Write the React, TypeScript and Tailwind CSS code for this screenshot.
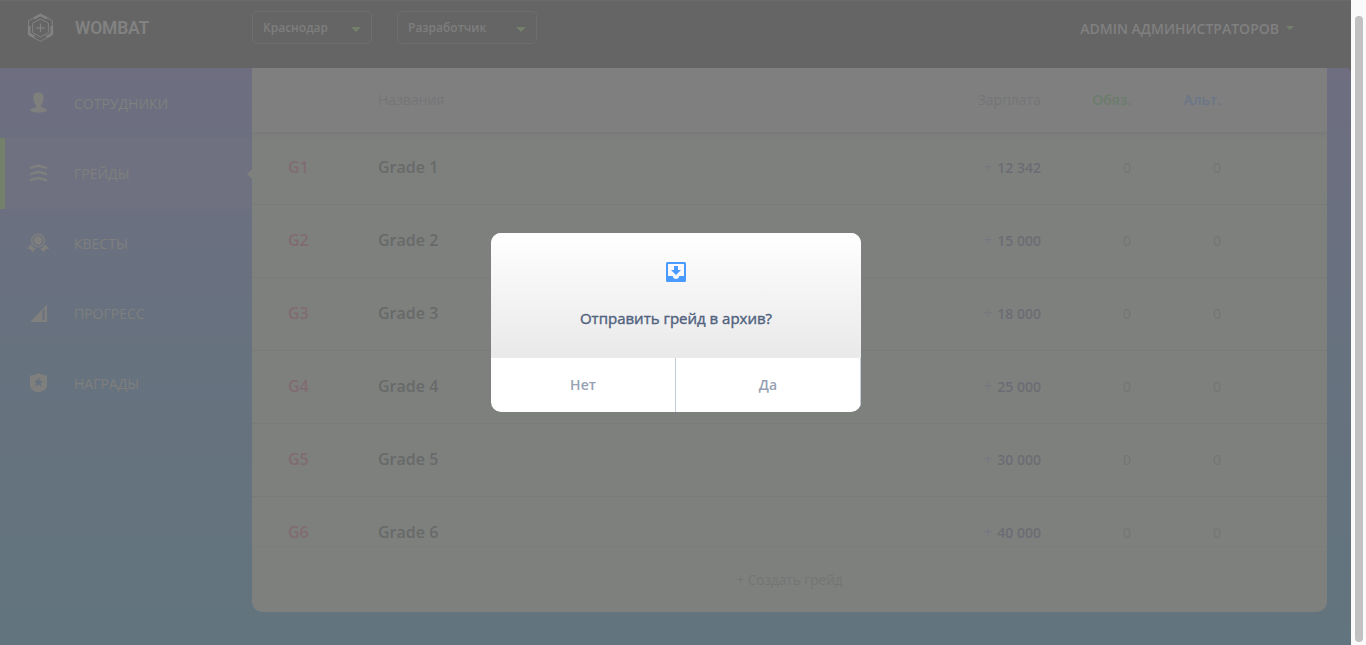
import React from "react";

function UserIcon() {
  return (
    <svg width="18" height="21" viewBox="0 0 18 21" fill="currentColor">
      <path d="M9.500.5c3.600 0 5.200 1.900 5.200 5.200 0 3.400-1.300 6.300-2.900 7.500v1.600c1.200 1 5.500 1.400 6.200 4-2 1.300-4.900 1.900-8.500 1.900s-6.500-.6-8.500-1.900c.7-2.600 5-3 6.200-4v-1.600C5.600 12 4.300 9.100 4.300 5.700 4.300 2.400 5.900.5 9.500.5Z" />
    </svg>
  );
}

function GradesIcon() {
  return (
    <svg width="18" height="18" viewBox="0 0 18 18" fill="currentColor">
      <path d="M1 2.700 9.500.3 18 2.700v2.600L9.500 2.900 1 5.300ZM1 8.900l8.500-2.400L18 8.900v2.600L9.500 9.100 1 11.500ZM1 15.100l8.500-2.400 8.500 2.400v2.600l-8.500-2.400L1 17.700Z" />
    </svg>
  );
}

function QuestIcon() {
  return (
    <svg width="24" height="20" viewBox="0 0 24 20" fill="currentColor">
      <circle cx="12" cy="7.500" r="6.300" fill="none" stroke="currentColor" strokeWidth="1.600" />
      <circle cx="12" cy="7.500" r="4.200" />
      <path d="M4.800 11.300c1.100 2.200 2.900 3.700 5.100 4.300L6.100 19.500l-1.400-3.200L1 15.800ZM19.200 11.300c-1.100 2.200-2.900 3.700-5.100 4.300l3.800 3.900 1.600-3.200 4-.5Z" />
    </svg>
  );
}

function ProgressIcon() {
  return (
    <svg width="18" height="18" viewBox="0 0 18 18" fill="currentColor">
      <path fillRule="evenodd" d="M18 .5V18H1ZM13.500 6.500V16h2V5.500Z" />
    </svg>
  );
}

function AwardIcon() {
  return (
    <svg width="18" height="20" viewBox="0 0 18 20" fill="currentColor">
      <path fillRule="evenodd" d="M9.500 0c2.300 1.300 5 2.200 8.500 2.600v9.600c0 4-3.500 6.300-8.500 7.300-5-1-8.500-3.300-8.500-7.300V2.600C4.500 2.200 7.200 1.300 9.500 0ZM9.500 4.200 8.100 7.800H4.500l2.900 2.300-1 3.600L9.500 11.600l3.100 2.100-1-3.600 2.900-2.300h-3.600Z" />
    </svg>
  );
}

function ArchiveIcon() {
  return (
    <svg width="20" height="20" viewBox="0 0 20 20" fill="#4a9bff">
      <path fillRule="evenodd" d="M1.500 0h17A1.500 1.500 0 0 1 20 1.500v17a1.500 1.500 0 0 1-1.500 1.500h-17A1.500 1.500 0 0 1 0 18.500v-17A1.500 1.500 0 0 1 1.500 0ZM2 2v12h4.700c.4 1.800 1.700 3 3.300 3s2.900-1.200 3.300-3H18V2Z" />
      <path d="M8 4h4v4h3l-5 5-5-5h3Z" />
    </svg>
  );
}

function Logo() {
  return (
    <svg width="27" height="30" viewBox="0 0 27 30" fill="none" stroke="currentColor">
      <path d="M13.500 1.300 25.400 7.700v14.100L13.500 28.300 1.600 21.800V7.700Z" strokeWidth="1" />
      <path d="M7 5.300 13.500 1.900 20 5.300M24.800 13v8L19.500 24M2.200 13v8L7.500 24" strokeWidth="2.600" />
      <path d="m13.500 6 7.900 4.200v9.300l-7.900 4.500-7.900-4.500v-9.300Z" strokeWidth="1" />
      <path d="M13.500 10.500v8.600M9.200 14.800h8.600" strokeWidth="1.200" />
    </svg>
  );
}

function Caret({ className }: { className: string }) {
  return (
    <svg className={className} viewBox="0 0 10 5" preserveAspectRatio="none" fill="#74806a">
      <path d="M0 0h10L5 5Z" />
    </svg>
  );
}

function Select({ label, className }: { label: string; className: string }) {
  return (
    <div className={`flex h-[33px] items-center justify-between rounded-[5px] border border-[#6e6e6e] pl-[10px] pr-[10px] text-[12px] font-semibold text-[#7e7e7e] ${className}`}>
      <span>{label}</span>
      <Caret className="mt-[3px] h-[5px] w-[10px]" />
    </div>
  );
}

const nav = [
  { label: "СОТРУДНИКИ", Icon: UserIcon },
  { label: "ГРЕЙДЫ", Icon: GradesIcon, active: true },
  { label: "КВЕСТЫ", Icon: QuestIcon },
  { label: "ПРОГРЕСС", Icon: ProgressIcon },
  { label: "НАГРАДЫ", Icon: AwardIcon },
];

const grades = ["12 342", "15 000", "18 000", "25 000", "30 000", "40 000"];

function Header() {
  return (
    <header className="flex h-[68px] items-start border-t border-[#6b6b6b] bg-[#656565]">
      <div className="flex w-[252px] items-center pl-[27px] pt-[12px] text-[#828282]">
        <Logo />
        <span className="ml-[21px] font-[Roboto,sans-serif] text-[17.5px] font-semibold leading-[30px] tracking-[-0.2px]">WOMBAT</span>
      </div>
      <Select label="Краснодар" className="mt-[10px] w-[120px]" />
      <Select label="Разработчик" className="ml-[25px] mt-[10px] w-[140px]" />
      <div className="ml-auto mr-[57px] flex h-[54px] items-center text-[14px] font-semibold text-[#808080]">
        ADMIN АДМИНИСТРАТОРОВ
        <Caret className="ml-[7px] h-[4px] w-[8px]" />
      </div>
    </header>
  );
}

function Sidebar() {
  return (
    <nav className="w-[252px] shrink-0">
      {nav.map(({ label, Icon, active }) => (
        <div
          key={label}
          className={`flex items-center text-[14px] text-[#7f7f7d] ${
            active ? "-mb-px h-[71px] border-l-[5px] border-[#748069] bg-[#6f7180] pl-[17px]" : "h-[70px] pl-[22px]"
          }`}
        >
          <span className="flex w-[32px] justify-center pb-px">
            <Icon />
          </span>
          <span className="ml-[20px]">{label}</span>
          {active && (
            <svg className="ml-auto" width="5" height="10" viewBox="0 0 5 10" fill="#7e807e">
              <path d="M5 0v10L0 5Z" />
            </svg>
          )}
        </div>
      ))}
    </nav>
  );
}

function GradeTable() {
  return (
    <section className="flex h-[544px] w-[1075px] flex-col overflow-hidden rounded-b-[10px] bg-[#7e807e]">
      <div className="relative flex h-[64px] shrink-0 items-center bg-[#7f7f7f] pb-[2px] pl-[126px] pr-[106px] text-[14px] shadow-[0_2px_5px_#777977]">
        <span className="flex-1 text-[#747577]">Названия</span>
        <span className="w-[120px] text-right text-[#747577]">Зарплата</span>
        <span className="w-[90px] text-right font-semibold text-[#6b7d6b]">Обяз.</span>
        <span className="w-[90px] text-right font-semibold text-[#6c7688]">Альт.</span>
      </div>
      <div className="h-[415px] shrink-0 overflow-hidden border-b border-[#7b7d7b]">
        {grades.map((salary, i) => (
          <div key={salary} className="flex h-[73px] items-center border-b border-[#797b79] pb-[2px] pl-[36px] pr-[106px] text-[14px]">
            <span className="w-[90px] text-[16px] font-semibold text-[#816b73]">G{i + 1}</span>
            <span className="flex-1 text-[16px] font-semibold text-[#686969]">Grade {i + 1}</span>
            <span className="w-[120px] text-right font-semibold text-[#6b6c73]">
              <span className="mr-px text-[16px] font-normal leading-none text-[#777780]">+</span> {salary}
            </span>
            <span className="w-[90px] text-right text-[#737574]">0</span>
            <span className="w-[90px] text-right text-[#737574]">0</span>
          </div>
        ))}
      </div>
      <div className="flex flex-1 items-center justify-center pt-px text-[13.6px] text-[#737574]">+ Создать грейд</div>
    </section>
  );
}

function ConfirmDialog() {
  return (
    <div className="absolute left-[491px] top-[233px] h-[179px] w-[370px] overflow-hidden rounded-[10px] bg-white text-center">
      <div className="flex h-[125px] flex-col items-center bg-linear-to-b from-white to-[#e9e9e9] pt-[29px]">
        <ArchiveIcon />
        <p className="mt-[26px] text-[15px] leading-[20px] text-[#50627e] [-webkit-text-stroke:0.4px_#50627e]">Отправить грейд в архив?</p>
      </div>
      <div className="flex h-[54px] text-[14px] font-semibold text-[#97a1b3]">
        <button className="flex-1 border-r border-[#c3ccd8] pb-[2px]">Нет</button>
        <button className="flex-1 border-r border-[#c3ccd8] pb-[2px]">Да</button>
      </div>
    </div>
  );
}

export default function App() {
  return (
    <div className="relative flex h-[645px] w-[1366px] overflow-hidden font-['Open_Sans',sans-serif]">
      <div className="h-full w-[1351px] bg-[#656565]">
        <Header />
        <div className="flex h-[577px] rounded-tr-[5px] bg-linear-to-b from-[#6e6e80] via-[#67727f] to-[#62747d]">
          <Sidebar />
          <GradeTable />
        </div>
      </div>
      <div className="h-full w-[15px] bg-[#fafafa] pl-[4px] pt-[16px]">
        <div className="h-[626px] w-[8px] rounded-full bg-[#c1c1c1]" />
      </div>
      <ConfirmDialog />
    </div>
  );
}
